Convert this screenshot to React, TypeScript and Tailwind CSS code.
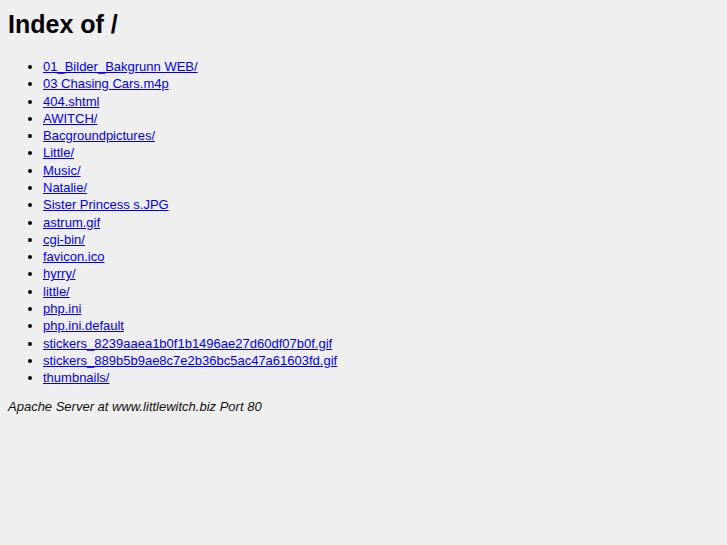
import React from "react";

const items = [
  "01_Bilder_Bakgrunn WEB/",
  "03 Chasing Cars.m4p",
  "404.shtml",
  "AWITCH/",
  "Bacgroundpictures/",
  "Little/",
  "Music/",
  "Natalie/",
  "Sister Princess s.JPG",
  "astrum.gif",
  "cgi-bin/",
  "favicon.ico",
  "hyrry/",
  "little/",
  "php.ini",
  "php.ini.default",
  "stickers_8239aaea1b0f1b1496ae27d60df07b0f.gif",
  "stickers_889b5b9ae8c7e2b36bc5ac47a61603fd.gif",
  "thumbnails/",
];

export default function App() {
  return (
    <div
      className="min-h-[545px] w-full bg-[#efefef] text-black px-[8px] pt-[8px]"
      style={{ fontFamily: '"Liberation Sans", Arial, sans-serif' }}
    >
      <h1 className="text-[25px] leading-[32px] font-bold m-0">Index of /</h1>
      <ul className="list-disc pl-[35px] mt-[18px] text-[13px] leading-[17.28px]">
        {items.map((it) => (
          <li key={it}>
            <a href="#" className="text-[#0000ee] underline">
              {it}
            </a>
          </li>
        ))}
      </ul>
      <address className="italic text-[13px] leading-[15px] mt-[13px] text-[#111]">
        Apache Server at www.littlewitch.biz Port 80
      </address>
    </div>
  );
}
